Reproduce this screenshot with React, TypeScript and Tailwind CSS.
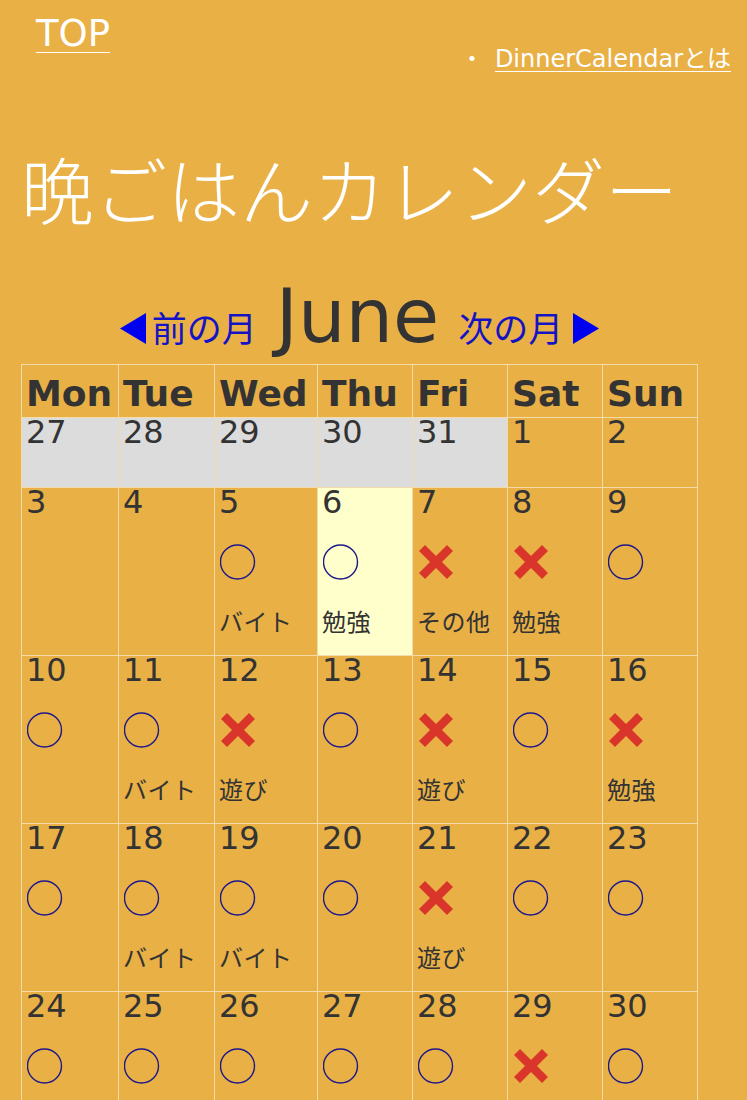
import React from "react";

type Day = {
  n: number;
  mark?: "o" | "x";
  label?: string;
  prev?: boolean;
  today?: boolean;
};

const HEAD = ["Mon", "Tue", "Wed", "Thu", "Fri", "Sat", "Sun"];

const WEEKS: Day[][] = [
  [
    { n: 27, prev: true },
    { n: 28, prev: true },
    { n: 29, prev: true },
    { n: 30, prev: true },
    { n: 31, prev: true },
    { n: 1 },
    { n: 2 },
  ],
  [
    { n: 3 },
    { n: 4 },
    { n: 5, mark: "o", label: "バイト" },
    { n: 6, mark: "o", label: "勉強", today: true },
    { n: 7, mark: "x", label: "その他" },
    { n: 8, mark: "x", label: "勉強" },
    { n: 9, mark: "o" },
  ],
  [
    { n: 10, mark: "o" },
    { n: 11, mark: "o", label: "バイト" },
    { n: 12, mark: "x", label: "遊び" },
    { n: 13, mark: "o" },
    { n: 14, mark: "x", label: "遊び" },
    { n: 15, mark: "o" },
    { n: 16, mark: "x", label: "勉強" },
  ],
  [
    { n: 17, mark: "o" },
    { n: 18, mark: "o", label: "バイト" },
    { n: 19, mark: "o", label: "バイト" },
    { n: 20, mark: "o" },
    { n: 21, mark: "x", label: "遊び" },
    { n: 22, mark: "o" },
    { n: 23, mark: "o" },
  ],
  [
    { n: 24, mark: "o" },
    { n: 25, mark: "o" },
    { n: 26, mark: "o" },
    { n: 27, mark: "o" },
    { n: 28, mark: "o" },
    { n: 29, mark: "x" },
    { n: 30, mark: "o" },
  ],
];

function Circle() {
  return (
    <svg width="36" height="36" viewBox="0 0 36 36" className="block">
      <circle cx="17.5" cy="18" r="17" fill="none" stroke="#1c1a8a" strokeWidth="1.4" />
    </svg>
  );
}

function Cross() {
  return (
    <svg width="36" height="36" viewBox="0 0 36 36" className="block">
      <line x1="4" y1="4" x2="32" y2="32" stroke="#d9352a" strokeWidth="8.5" />
      <line x1="32" y1="4" x2="4" y2="32" stroke="#d9352a" strokeWidth="8.5" />
    </svg>
  );
}

function Cell({ day, tall }: { day: Day; tall: boolean }) {
  const bg = day.prev ? "bg-[#dcdcdc]" : day.today ? "bg-[#ffffcc]" : "";
  return (
    <div
      className={`${tall ? "h-[168px]" : "h-[70px]"} ${bg} border-r border-b border-[#f3dcaa] pl-[4px]`}
    >
      <div className="text-[32px] leading-[28px]">{day.n}</div>
      {day.mark && (
        <div className="mt-[28px] ml-[1px]">
          {day.mark === "o" ? <Circle /> : <Cross />}
        </div>
      )}
      {day.label && (
        <div className="mt-[31px] text-[24px] leading-[24px] tracking-[0.5px] whitespace-nowrap">
          {day.label}
        </div>
      )}
    </div>
  );
}

export default function App() {
  return (
    <div className="min-h-[1100px] bg-[#e9b046] px-[21px] text-[#333] font-['DejaVu_Sans','Noto_Sans_CJK_JP',sans-serif]">
      {/* header links */}
      <div className="flex items-start justify-between">
        <a href="#" className="mt-[15px] ml-[15px] text-[37px] leading-[37px] text-white underline decoration-1 underline-offset-[6px]">
          TOP
        </a>
        <ul className="mt-[47px] mr-[-5px] flex text-[24px] leading-[24px] text-white">
          <li className="flex">
            <span className="mr-[11px]">・</span>
            <a href="#" className="underline decoration-1 underline-offset-[4px]">
              DinnerCalendarとは
            </a>
          </li>
        </ul>
      </div>

      <h1 className="mt-[87px] text-[73px] leading-[72px] font-light text-white whitespace-nowrap">
        晩ごはんカレンダー
      </h1>

      {/* month switcher */}
      <div className="mt-[49px] w-[677px] flex justify-center items-baseline h-[74px]">
        <a href="#" className="flex items-baseline text-[35px] leading-[35px] text-[#1414c4]">
          <svg width="26" height="31" viewBox="0 0 26 31" className="self-end mb-[4px] mr-[6px]">
            <polygon points="0,15.5 26,0 26,31" fill="#0000f0" />
          </svg>
          前の月
        </a>
        <span className="mx-[19px] text-[75px] leading-[74px]">June</span>
        <a href="#" className="flex items-baseline text-[35px] leading-[35px] text-[#1414c4]">
          次の月
          <svg width="26" height="31" viewBox="0 0 26 31" className="self-end mb-[4px] ml-[10px]">
            <polygon points="0,0 26,15.5 0,31" fill="#0000f0" />
          </svg>
        </a>
      </div>

      {/* calendar */}
      <div className="mt-[11px] w-[677px] grid grid-cols-[97px_96px_103px_95px_95px_95px_95px] border-t border-l border-[#f3dcaa]">
        {HEAD.map((h) => (
          <div
            key={h}
            className="h-[53px] border-r border-b border-[#f3dcaa] pl-[4px] pt-[11px] text-[36px] leading-[36px] font-bold whitespace-nowrap overflow-hidden"
          >
            {h}
          </div>
        ))}
        {WEEKS.map((week, wi) =>
          week.map((d, di) => <Cell key={`${wi}-${di}`} day={d} tall={wi > 0} />)
        )}
      </div>
    </div>
  );
}
